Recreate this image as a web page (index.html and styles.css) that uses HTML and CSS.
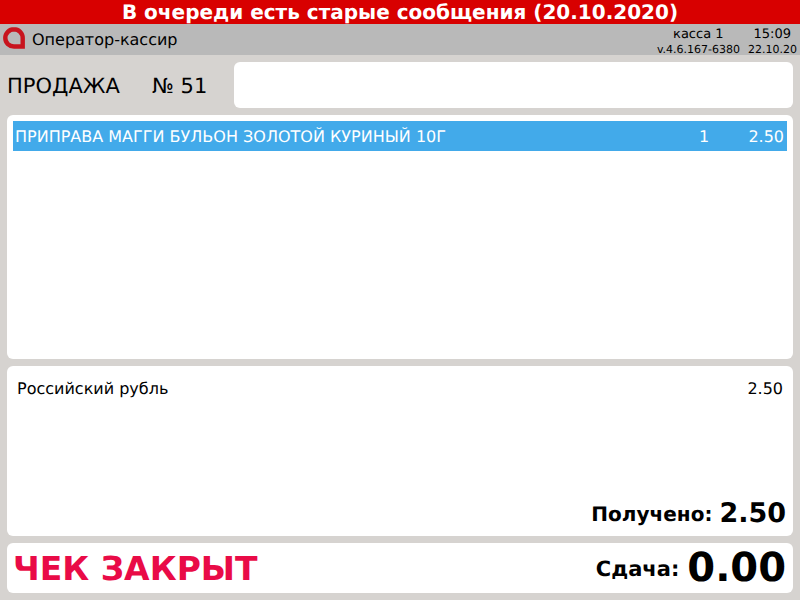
FILE: index.html
```html
<!DOCTYPE html>
<html lang="ru">
<head>
<meta charset="utf-8">
<title>Касса</title>
<link rel="stylesheet" href="styles.css">
</head>
<body>
<div class="alert">В очереди есть старые сообщения (20.10.2020)</div>
<header class="status">
  <svg class="logo" width="22" height="22" viewBox="0 0 22 22"><path d="M11 2.300C6.200 2.300 2.300 6.200 2.300 11C2.300 15.800 6.200 19.500 11 19.500H19.700V11C19.700 6.200 15.800 2.300 11 2.300Z" fill="none" stroke="#c8141e" stroke-width="4.400"/></svg>
  <span class="operator">Оператор-кассир</span>
  <div class="info">
    <div class="info-top"><span class="kassa">касса 1</span><span class="time">15:09</span></div>
    <div class="info-bottom"><span>v.4.6.167-6380</span><span>22.10.20</span></div>
  </div>
</header>
<main class="content">
  <section class="title-row">
    <h1 class="mode">ПРОДАЖА</h1>
    <span class="number">№ 51</span>
    <div class="card message"></div>
  </section>
  <section class="card items">
    <div class="item"><span class="item-name">ПРИПРАВА МАГГИ БУЛЬОН ЗОЛОТОЙ КУРИНЫЙ 10Г</span><span class="item-qty">1</span><span class="item-sum">2.50</span></div>
  </section>
  <section class="card payments">
    <div class="payment"><span>Российский рубль</span><span>2.50</span></div>
    <div class="received"><span class="received-label">Получено:</span><span class="received-value">2.50</span></div>
  </section>
  <section class="card footer">
    <span class="closed">ЧЕК ЗАКРЫТ</span>
    <span class="change"><span class="change-label">Сдача:</span><span class="change-value">0.00</span></span>
  </section>
</main>
</body>
</html>
```
FILE: styles.css
```css
* { box-sizing: border-box; margin: 0; padding: 0; }
html, body { width: 800px; height: 600px; overflow: hidden; }
body { background: #d6d3d0; color: #000; font-family: "DejaVu Sans", sans-serif; text-rendering: geometricPrecision; }
.alert { height: 24px; background: #d80000; color: #fff; font-size: 20px; font-weight: bold; line-height: 24px; text-align: center; }
.status { height: 31px; background: #b9b9b9; display: flex; align-items: flex-start; padding: 3px 3px 0; }
.logo { flex: none; }
.operator { font-size: 16px; line-height: 26px; margin-left: 7px; }
.info { margin-left: auto; }
.info-top { display: flex; font-size: 13px; justify-content: flex-end; line-height: 16px; padding-right: 6px; }
.time { margin-left: 30px; }
.info-bottom { display: flex; justify-content: space-between; gap: 8px; font-size: 11px; line-height: 14px; }
.content { display: flex; flex-direction: column; gap: 7px; padding: 7px; height: 545px; }
.card { background: #fff; border-radius: 6px; }
.title-row { display: flex; align-items: center; height: 46px; }
.mode { font-size: 21px; font-weight: normal; width: 145px; padding-top: 2px; }
.number { font-size: 21px; width: 82px; padding-top: 2px; }
.message { flex: 1; height: 46px; }
.items { height: 244px; padding: 6px; }
.item { display: flex; height: 30px; align-items: center; background: #42aaea; color: #fff; font-size: 16px; padding: 0 3px; }
.item-name { flex: 1; margin-left: -1px; }
.item-qty { width: 49px; }
.item-sum { width: 36px; text-align: right; }
.payments { height: 170px; display: flex; flex-direction: column; justify-content: space-between; padding: 13px 10px 7px 10px; }
.payment { display: flex; justify-content: space-between; font-size: 16px; }
.received { display: flex; justify-content: flex-end; align-items: center; gap: 7px; margin-right: -3px; }
.received-label { font-size: 20px; font-weight: bold; }
.received-value { font-size: 27px; font-weight: bold; }
.footer { height: 50px; display: flex; justify-content: space-between; align-items: center; padding: 0 7px 0 6px; }
.closed { font-size: 33px; font-weight: bold; color: #e90b47; padding-top: 1px; }
.change { display: flex; align-items: center; gap: 8px; }
.change-label { font-size: 21px; font-weight: bold; padding-top: 1px; }
.change-value { font-size: 40px; font-weight: bold; }
```
